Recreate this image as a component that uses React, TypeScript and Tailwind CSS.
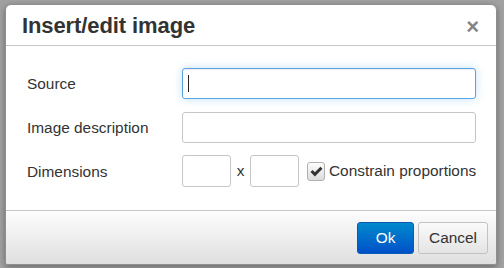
const font = { fontFamily: '"Liberation Sans", Arial, sans-serif' };

const Label = ({ children }: { children: React.ReactNode }) => (
  <div className="w-[155px] shrink-0 text-[15.4px] text-[#333] pt-[1px]">{children}</div>
);

const App = () => {
  return (
    <div
      className="w-[504px] h-[268px] bg-[#a1a1a1] pl-[5px] pt-[4px] overflow-hidden"
      style={font}
    >
      <div className="w-[492px] h-[261px] bg-white rounded-t-[6px] rounded-b-[3px] border border-[#8f8f8f] shadow-[0_2px_6px_rgba(0,0,0,0.35)] flex flex-col overflow-hidden">
        <div className="h-[41px] shrink-0 border-b border-[#c5c5c5] flex items-center justify-between pl-[16px] pr-[17px]">
          <h1 className="text-[22px] font-bold text-[#333] leading-none tracking-[-0.1px] mt-[1px]">
            Insert/edit image
          </h1>
          <span className="text-[22px] font-bold text-[#858585] leading-none mt-[4px]">
            ×
          </span>
        </div>

        <div className="flex-1 flex flex-col pt-[22px] pl-[21px]">
          <div className="flex items-center h-[31px]">
            <Label>Source</Label>
            <div className="w-[294px] h-[31px] rounded-[3px] border border-[#59a4e5] bg-white shadow-[inset_0_1px_1px_rgba(0,0,0,0.075),0_0_8px_rgba(82,168,236,0.35)] flex items-center pl-[5px]">
              <span className="w-px h-[17px] bg-[#222]" />
            </div>
          </div>
          <div className="flex items-center h-[31px] mt-[13px]">
            <Label>Image description</Label>
            <div className="w-[294px] h-[31px] rounded-[3px] border border-[#c5c5c5] bg-white" />
          </div>
          <div className="flex items-center h-[32px] mt-[12px]">
            <Label>Dimensions</Label>
            <div className="w-[49px] h-[32px] rounded-[3px] border border-[#c5c5c5] bg-white" />
            <span className="w-[19px] text-center text-[15.4px] text-[#333]">x</span>
            <div className="w-[49px] h-[32px] rounded-[3px] border border-[#c5c5c5] bg-white" />
            <div className="ml-[8px] w-[18px] h-[19px] rounded-[3px] border border-[#b1b1b1] bg-gradient-to-b from-[#fdfdfd] to-[#dcdcdc] flex items-center justify-center">
              <svg width="13" height="11" viewBox="0 0 13 11">
                <path d="M0.5 6 L2.6 3.9 L4.9 6.2 L10.4 0.7 L12.5 2.8 L4.9 10.4 Z" fill="#333" />
              </svg>
            </div>
            <span className="ml-[4px] text-[15.4px] text-[#333]">Constrain proportions</span>
          </div>
        </div>

        <div className="h-[54px] shrink-0 border-t border-[#c5c5c5] bg-gradient-to-b from-[#fdfdfd] to-[#dfdfdf] flex items-center justify-end gap-[4px] pr-[8px]">
          <button className="w-[57px] h-[32px] rounded-[3px] border border-[#0a5bb0] bg-gradient-to-b from-[#0088cc] to-[#0050c8] text-white text-[15.4px]">
            Ok
          </button>
          <button className="w-[70px] h-[32px] rounded-[3px] border border-[#c2c2c2] bg-gradient-to-b from-[#fafafa] to-[#e4e4e4] text-[#333] text-[15.4px]">
            Cancel
          </button>
        </div>
      </div>
    </div>
  );
};

export default App;
